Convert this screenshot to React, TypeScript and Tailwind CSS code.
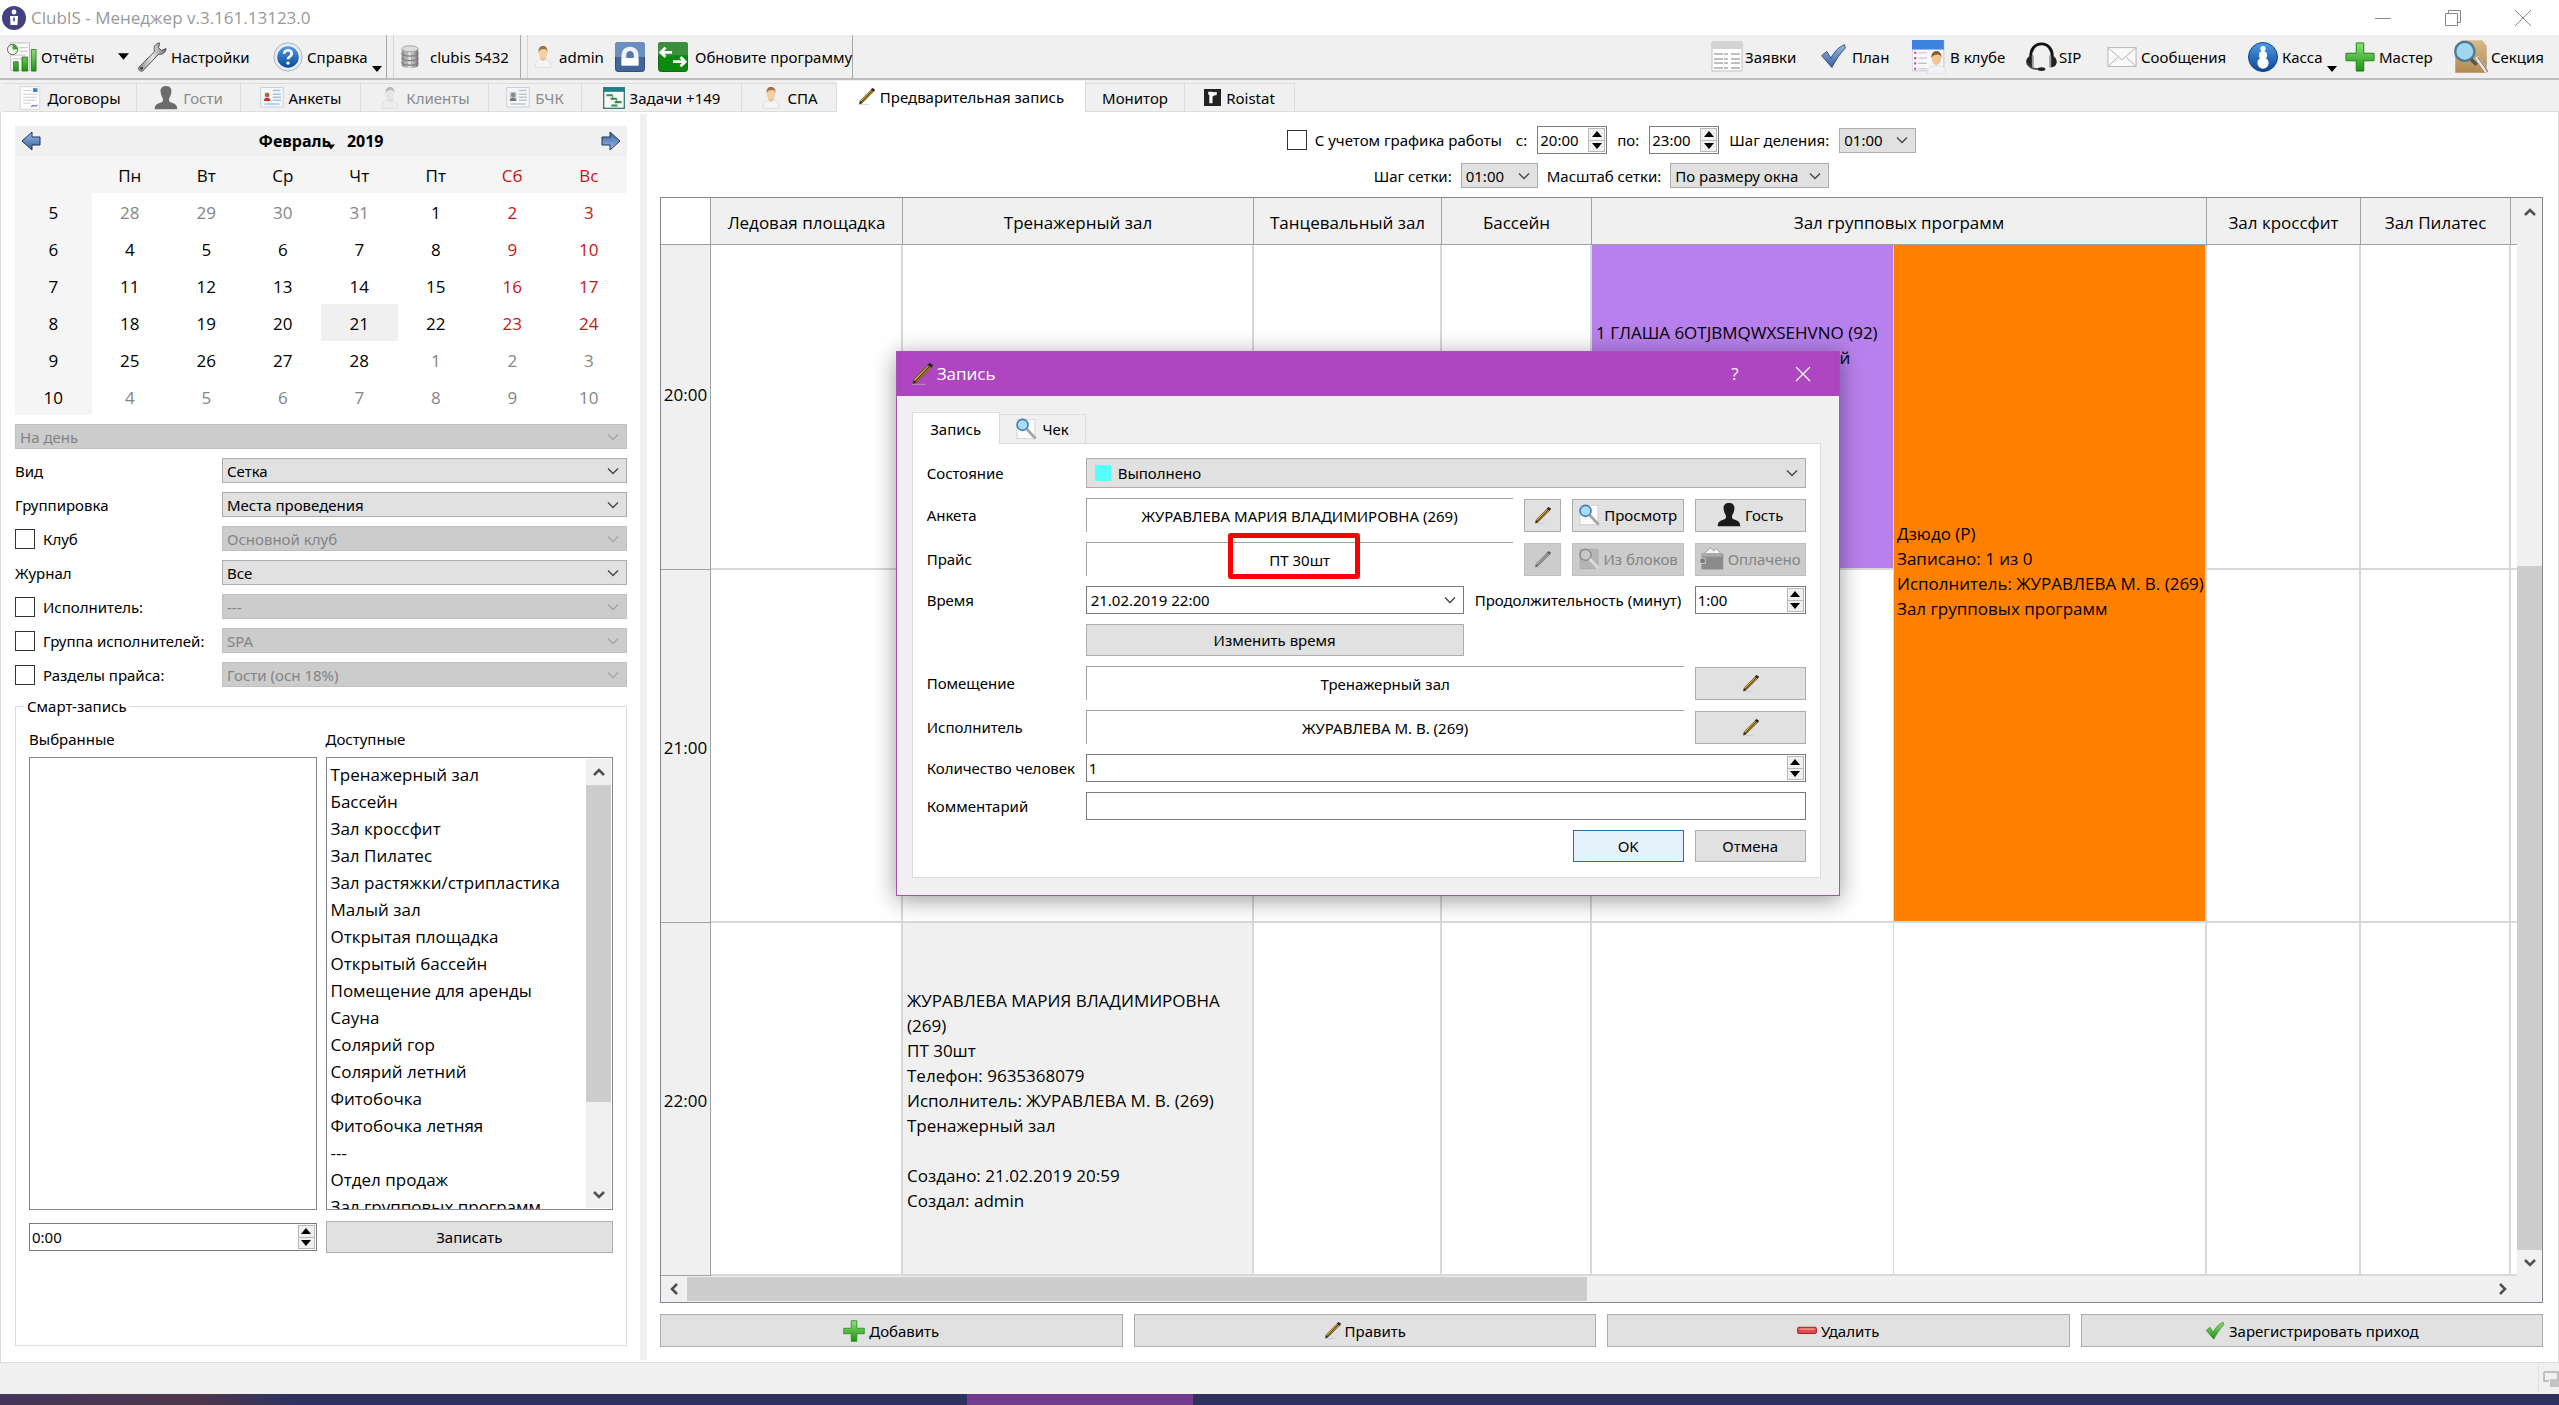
import type { ReactNode } from "react";

const ui = "font-['Noto_Sans',sans-serif] text-[15px] leading-5";
const grid = "font-['Open_Sans',sans-serif] text-[17px] leading-[25px]";

/* ---------- icons ---------- */

type IconProps = { className?: string };

function Svg({ className = "size-[30px]", box = "0 0 32 32", children }: IconProps & { box?: string; children: ReactNode }) {
  return (
    <svg viewBox={box} className={`shrink-0 ${className}`} fill="none" aria-hidden>
      {children}
    </svg>
  );
}

function Gradients() {
  return (
    <svg className="absolute size-0" aria-hidden>
      <defs>
        <linearGradient id="green" x1="0" y1="0" x2="0" y2="1">
          <stop offset="0" stopColor="#8fe07a" />
          <stop offset="1" stopColor="#1c9412" />
        </linearGradient>
        <linearGradient id="blue" x1="0" y1="0" x2="0" y2="1">
          <stop offset="0" stopColor="#4f9be8" />
          <stop offset="1" stopColor="#0b4794" />
        </linearGradient>
        <linearGradient id="steel" x1="0" y1="0" x2="0" y2="1">
          <stop offset="0" stopColor="#9dbce3" />
          <stop offset="1" stopColor="#35619f" />
        </linearGradient>
        <linearGradient id="silver" x1="0" y1="0" x2="1" y2="0">
          <stop offset="0" stopColor="#8a8a8a" />
          <stop offset="0.5" stopColor="#e6e6e6" />
          <stop offset="1" stopColor="#6f6f6f" />
        </linearGradient>
        <linearGradient id="box" x1="0" y1="0" x2="0" y2="1">
          <stop offset="0" stopColor="#d9bb8b" />
          <stop offset="1" stopColor="#b18850" />
        </linearGradient>
      </defs>
    </svg>
  );
}

function AppLogo() {
  return (
    <Svg className="size-6" box="0 0 24 24">
      <circle cx="12" cy="12" r="12" fill="#45417f" />
      <circle cx="12" cy="6" r="2.4" fill="#fff" />
      <path d="M8 10h8l-.6 9H8.6z" fill="#fff" />
      <path d="M12 10l1 4-1 2-1-2z" fill="#45417f" />
    </Svg>
  );
}

function ReportIcon() {
  return (
    <Svg>
      <path d="M4 1h20v29H4z" fill="#fbfbfb" stroke="#bdbdbd" />
      <path d="M13 6h9M13 10h9M6 14h14M6 18h10" stroke="#cfcfcf" strokeWidth="1.4" />
      <circle cx="6" cy="8" r="5.5" fill="#eef6ea" stroke="#5a5a5a" />
      <path d="M6 8V3a5 5 0 015 5z" fill="#37a52a" />
      <path d="M7 21h5v10H7zM16 16h6v15h-6zM26 8h5v23h-5z" fill="url(#green)" stroke="#1d6414" strokeWidth=".8" />
    </Svg>
  );
}

function WrenchIcon() {
  return (
    <Svg>
      <path d="M24 1c-5 1-7 5-5 9L2 27c-1 2 1 5 4 4l17-18c4 1 8-2 8-6l-5 2-3-3z" fill="url(#silver)" stroke="#4a4a4a" />
      <circle cx="5" cy="28" r="1.4" fill="#333" />
    </Svg>
  );
}

function HelpIcon() {
  return (
    <Svg>
      <circle cx="16" cy="16" r="15" fill="#e8eef5" stroke="#9dafc4" />
      <circle cx="16" cy="16" r="11.5" fill="url(#blue)" />
      <path d="M12 12.500c0-5 8-5 8 0 0 3-4 3-4 6" stroke="#fff" strokeWidth="2.800" />
      <circle cx="16" cy="22.500" r="1.800" fill="#fff" />
    </Svg>
  );
}

function DatabaseIcon() {
  return (
    <Svg className="size-[24px]">
      <path d="M5 5v22c0 5 22 5 22 0V5" fill="url(#silver)" />
      <path d="M5 11c0 5 22 5 22 0M5 17c0 5 22 5 22 0M5 23c0 5 22 5 22 0" stroke="#7a7a7a" strokeWidth="1.500" />
      <path d="M12 9v20M18 10v20M23 9v20" stroke="#9b9b9b" />
      <ellipse cx="16" cy="5" rx="11" ry="4" fill="#dcdcdc" stroke="#999" />
    </Svg>
  );
}

function PersonIcon({ className = "size-[22px]", muted = false }: IconProps & { muted?: boolean }) {
  return (
    <Svg className={className}>
      <path d="M5 31c-1-8 3-11 8-12h6c5 1 9 4 8 12z" fill={muted ? "#ededed" : "#f4f4f7"} stroke="#d5d5da" />
      <path d="M12 15h8v4l-4 3-4-3z" fill={muted ? "#ddd" : "#e9c193"} />
      <ellipse cx="16" cy="10" rx="6" ry="8" fill={muted ? "#e6e6e6" : "#f3cfa3"} />
      <path d="M9.500 10C9 2 12 0 16 0s7 2 6.500 10c-1-4-2-5-4-5.500-3 .5-8 0-9 5.500z" fill={muted ? "#b9b9b9" : "#a0703f"} />
    </Svg>
  );
}

function GuestIcon({ className = "size-[24px]", muted = false }: IconProps & { muted?: boolean }) {
  return (
    <Svg className={className}>
      <path d="M16 0c6 0 8 4 7 9-.5 4-2 6-3 8 0 3 0 4 3 5 5 2 8 3 8 9H1c0-6 3-7 8-9 3-1 3-2 3-5-1-2-2.500-4-3-8-1-5 1-9 7-9z" fill={muted ? "#6b6b6b" : "#1b1b1b"} />
    </Svg>
  );
}

function LockIcon() {
  return (
    <Svg>
      <rect x=".5" y=".5" width="31" height="31" rx="3" fill="#41669c" stroke="#26457a" />
      <path d="M0 16h32V3a3 3 0 00-3-3H3a3 3 0 00-3 3z" fill="#6d8fbf" />
      <path d="M7 25V14c0-12 18-12 18 0v11z" fill="#eef2f8" />
      <path d="M12 17v-3c0-6 8-6 8 0v3z" fill="#5478ab" />
      <path d="M7 17h18v8H7z" fill="#fff" />
    </Svg>
  );
}

function UpdateIcon() {
  return (
    <Svg>
      <rect x=".5" y=".5" width="31" height="31" rx="3" fill="#0c8a0c" stroke="#0a5f14" />
      <path d="M0 14h32V3a3 3 0 00-3-3H3a3 3 0 00-3 3z" fill="#3d8f3f" />
      <path d="M8 6l-5 5 5 5M3 11h12M24 16l5 5-5 5M29 21H16" stroke="#fff" strokeWidth="3" />
    </Svg>
  );
}

function RequestsIcon() {
  return (
    <Svg className="size-8">
      <path d="M1 1h30v29H1z" fill="#fff" stroke="#bdbdbd" />
      <path d="M1 1h30v7H1z" fill="#d4d4d4" />
      <path d="M3 13h14M3 18h14M3 22h14M3 27h14M20 13h9M20 18h9M20 22h9M20 27h9" stroke="#a9a9a9" strokeWidth="1.500" strokeDasharray="9 1" />
    </Svg>
  );
}

function TickIcon({ className = "size-[27px]", green = false }: IconProps & { green?: boolean }) {
  return (
    <Svg className={className}>
      <path d="M2 15l6-5 5 8C17 10 22 5 29 2l1 4C24 12 19 20 14 29z" fill={green ? "url(#green)" : "url(#steel)"} stroke={green ? "#2c7a1f" : "#27406a"} />
    </Svg>
  );
}

function InClubIcon() {
  return (
    <Svg className="size-[34px]">
      <path d="M0 1h30v28H0z" fill="#f8f8fb" stroke="#c4c8d4" />
      <path d="M0 0h30v9H0z" fill="#3c83e0" />
      <path d="M2 12h2M2 17h2M2 22h2M2 27h2" stroke="#d0489a" strokeWidth="2" />
      <path d="M6 12h8M6 17h8M6 22h8M6 27h8" stroke="#b8c0d0" />
      <path d="M14 32c0-6 3-8 9-8s9 2 9 8z" fill="#f2f2f6" stroke="#cfcfd6" strokeWidth=".6" />
      <ellipse cx="23" cy="17" rx="4.500" ry="6.500" fill="#f0c795" />
      <path d="M18 17c0-9 10-9 10 0-1-5-8-4-10 0z" fill="#8a5a2c" />
    </Svg>
  );
}

function HeadsetIcon() {
  return (
    <Svg className="size-[31px]">
      <path d="M5 18C3-2 29-2 27 18" stroke="#111" strokeWidth="3" />
      <path d="M7 15c-9 0-9 13 0 12zM25 15c9 0 9 13 0 12z" fill="#222" />
      <path d="M7 15v12M25 15v12" stroke="#999" strokeWidth="2" />
      <path d="M2 22c1 7 7 7 12 7" stroke="#444" strokeWidth="1.500" />
      <ellipse cx="16" cy="29" rx="4" ry="2" fill="#222" />
    </Svg>
  );
}

function MailIcon() {
  return (
    <Svg>
      <rect x="1" y="6" width="30" height="20" fill="#fafafa" stroke="#b3b3b3" />
      <path d="M1 6l15 13L31 6M1 26l11-10M31 26L20 16" stroke="#b0b0b0" />
    </Svg>
  );
}

function CashIcon() {
  return (
    <Svg>
      <circle cx="16" cy="16" r="15.500" fill="url(#blue)" stroke="#0b4080" />
      <circle cx="16" cy="7" r="2.800" fill="#fff" />
      <circle cx="16" cy="14" r="4.300" fill="#fff" />
      <circle cx="16" cy="22.500" r="6" fill="#fff" />
    </Svg>
  );
}

function PlusIcon({ className = "size-[30px]" }: IconProps) {
  return (
    <Svg className={className}>
      <path d="M12 1h8v11h11v8H20v11h-8V20H1v-8h11z" fill="url(#green)" stroke="#17800f" />
    </Svg>
  );
}

function MinusIcon() {
  return (
    <Svg className="size-[20px]">
      <rect x="1" y="10" width="30" height="10" rx="2" fill="#e14b4f" stroke="#9c1d22" strokeWidth="1.500" />
      <path d="M4 13h24" stroke="#f5a0a0" strokeWidth="2" />
    </Svg>
  );
}

function SectionIcon() {
  return (
    <Svg className="size-[36px]">
      <path d="M2 6l6-5h18l4 5v24H2z" fill="url(#box)" />
      <path d="M21 16l9 13" stroke="#e8e8e8" strokeWidth="3.500" />
      <path d="M22 16l9 13" stroke="#777" />
      <circle cx="10.500" cy="11" r="8.500" fill="#9fd8ee" stroke="#4e7896" strokeWidth="2" />
      <path d="M16 18l5 5" stroke="#555" strokeWidth="3" />
    </Svg>
  );
}

function SearchIcon({ className = "size-[22px]", muted = false }: IconProps & { muted?: boolean }) {
  return (
    <Svg className={className}>
      <path d="M3 2h26v28H3z" fill={muted ? "#b5b5b5" : "#fbfbfb"} stroke={muted ? "#a5a5a5" : "#c8c8c8"} />
      <circle cx="11" cy="10" r="8" fill={muted ? "#c9c9c9" : "#a6def7"} stroke={muted ? "#8d8d8d" : "#3f76ac"} strokeWidth="2.200" />
      <path d="M17 16l13 14" stroke={muted ? "#dcdcdc" : "#a4a4a4"} strokeWidth="4" />
    </Svg>
  );
}

function WalletIcon() {
  return (
    <Svg className="size-[24px]">
      <path d="M5 9l9-8 4 4 4-3 6 7" fill="#f2f2f2" stroke="#8a8a8a" />
      <path d="M2 8h27l2 3v19H2z" fill="#8b8b8b" />
      <path d="M2 8h27v5H2z" fill="#a9a9a9" />
      <path d="M0 15h7v7H0z" fill="#7a7a7a" stroke="#ddd" />
    </Svg>
  );
}

function PencilIcon({ className = "size-[17px]", muted = false }: IconProps & { muted?: boolean }) {
  return (
    <Svg className={className}>
      <path d="M1 31h20" stroke="#bbb" />
      <path d="M25 3l5 3L9 27l-6 3 1-6z" fill={muted ? "#b5b5b5" : "#e3bf4c"} stroke={muted ? "#777" : "#6d531a"} strokeWidth="1.500" />
      <path d="M27 5L6 27" stroke={muted ? "#777" : "#4b3a16"} strokeWidth="2" />
      <path d="M24 3l3-3 5 3-2 4zM3 30l1-5 4 3z" fill={muted ? "#666" : "#222"} />
    </Svg>
  );
}

function DocIcon() {
  return (
    <Svg className="size-[24px]">
      <path d="M3 1h26v30H3z" fill="#fff" stroke="#ccc" />
      <path d="M7 6h10M7 11h18M7 15h18M7 19h18M7 23h10" stroke="#c9d0dc" strokeWidth="1.500" />
      <path d="M20 3h6v5h-6z" fill="#3c7fd0" />
      <path d="M18 28c2-5 4 2 8-3" stroke="#6a5fc0" strokeWidth="1.500" />
    </Svg>
  );
}

function CardIcon({ muted = false }: { muted?: boolean }) {
  return (
    <Svg className="size-[24px]">
      <path d="M1 2h30v26H1z" fill="#f5f8fb" stroke="#b9c4cf" />
      <path d="M5 8h9v12H5z" fill={muted ? "#c7c7c7" : "#dfe7f0"} />
      <circle cx="9.500" cy="12" r="3" fill={muted ? "#888" : "#b5622e"} />
      <path d="M5 20c0-6 9-6 9 0z" fill={muted ? "#777" : "#c9302c"} />
      <path d="M17 6h10M17 11h11M17 15h11M17 19h11M6 24h20" stroke={muted ? "#c3c3c3" : "#9fc3de"} strokeWidth="1.800" />
    </Svg>
  );
}

function TasksIcon() {
  return (
    <Svg className="size-[22px]">
      <rect x="1" y="1" width="30" height="30" fill="#f7fbfa" stroke="#3f7d7c" strokeWidth="2" />
      <path d="M1 1h30v6H1z" fill="#1d7f88" />
      <path d="M5 12h9M11 17h9M17 22h10M12 27h9" stroke="#2f8f4d" strokeWidth="3" />
      <path d="M14 12v5M20 17v5" stroke="#555" />
    </Svg>
  );
}

function RoistatIcon() {
  return (
    <Svg className="size-[17px]">
      <rect width="32" height="32" fill="#222" />
      <path d="M8 8h5v19M13 15c1-5 4-7 11-6" stroke="#fff" strokeWidth="6" />
    </Svg>
  );
}

function ArrowIcon({ flip = false }: { flip?: boolean }) {
  return (
    <Svg className={flip ? "size-5 rotate-180" : "size-5"} box="0 0 20 20">
      <path d="M1 10l10-9v5h8v8h-8v5z" fill="url(#steel)" stroke="#1f3560" />
    </Svg>
  );
}

function Caret({ className = "size-[10px]" }: IconProps) {
  return (
    <Svg className={className} box="0 0 10 10">
      <path d="M0 2h10L5 8z" fill="#000" />
    </Svg>
  );
}

function Chevron({ className, stroke = "#444" }: IconProps & { stroke?: string }) {
  return (
    <Svg className={className} box="0 0 12 12">
      <path d="M1 3.500l5 5 5-5" stroke={stroke} strokeWidth="1.300" />
    </Svg>
  );
}

function ScrollArrow({ className = "" }: IconProps) {
  return (
    <Svg className={`size-3 ${className}`} box="0 0 12 12">
      <path d="M1 9l5-5 5 5" stroke="#505050" strokeWidth="2.500" />
    </Svg>
  );
}

/* ---------- controls ---------- */

type SelectProps = {
  id?: string;
  label?: string;
  value: string;
  disabled?: boolean;
  className?: string;
  look?: string;
};

function Select({ id, label, value, disabled = false, className = "flex-1", look = "h-[25px] pl-1" }: SelectProps) {
  return (
    <div className={`relative ${className}`}>
      <select
        id={id}
        aria-label={label}
        disabled={disabled}
        className={`block w-full appearance-none border pr-6 opacity-100 ${look} ${
          disabled ? "border-[#bfbfbf] bg-[#cccccc] text-[#838383]" : "border-[#adadad] bg-[#e1e1e1] text-black"
        }`}
      >
        <option>{value}</option>
      </select>
      <Chevron className="pointer-events-none absolute top-1/2 right-2 size-3 -translate-y-1/2" stroke={disabled ? "#a3a3a3" : "#444"} />
    </div>
  );
}

function Spin({ id, label, value, className }: { id?: string; label?: string; value: string; className: string }) {
  return (
    <div className={`flex border border-[#7a7a7a] bg-white ${className}`}>
      <input id={id} aria-label={label} defaultValue={value} className="w-0 min-w-0 flex-1 px-[2px] outline-none" />
      <div className="flex w-[19px] flex-col p-px">
        <button aria-label="Больше" className="flex flex-1 items-center justify-center border border-[#b8b8b8] bg-[#f0f0f0]">
          <Caret className="size-[10px] rotate-180" />
        </button>
        <button aria-label="Меньше" className="flex flex-1 items-center justify-center border border-t-0 border-[#b8b8b8] bg-[#f0f0f0]">
          <Caret className="size-[10px]" />
        </button>
      </div>
    </div>
  );
}

function Button({ children, className = "", disabled = false, label }: { children: ReactNode; className?: string; disabled?: boolean; label?: string }) {
  return (
    <button
      aria-label={label}
      disabled={disabled}
      className={`flex items-center justify-center gap-1 border ${
        disabled ? "border-[#bfbfbf] bg-[#cccccc] text-[#838383]" : "border-[#adadad] bg-[#e1e1e1]"
      } ${className}`}
    >
      {children}
    </button>
  );
}

function Check({ id }: { id: string }) {
  return <input id={id} type="checkbox" className="size-5 shrink-0 appearance-none border border-[#333] bg-white" />;
}

/* ---------- top bars ---------- */

function TitleBar() {
  return (
    <header className="flex h-[35px] items-center justify-between bg-white pr-7 pl-[2px]">
      <div className="flex items-center gap-[5px]">
        <AppLogo />
        <h1 className="font-['Open_Sans',sans-serif] text-[17px] text-[#999]">ClubIS - Менеджер v.3.161.13123.0</h1>
      </div>
      <div className="flex gap-[54px]">
        <button aria-label="Свернуть">
          <Svg className="size-4" box="0 0 16 16"><path d="M0 8.500h16" stroke="#888" /></Svg>
        </button>
        <button aria-label="Восстановить">
          <Svg className="size-4" box="0 0 16 16"><path d="M.5 3.500h12v12H.5zM3.500 3V.5h12v12H13" stroke="#888" /></Svg>
        </button>
        <button aria-label="Закрыть">
          <Svg className="size-4" box="0 0 16 16"><path d="M0 0l16 16M16 0L0 16" stroke="#888" /></Svg>
        </button>
      </div>
    </header>
  );
}

const rightTools = [
  { name: "Заявки", icon: <RequestsIcon />, width: "w-[109px] gap-[2px]" },
  { name: "План", icon: <TickIcon />, width: "w-[92px] gap-[5px]" },
  { name: "В клубе", icon: <InClubIcon />, width: "w-[114px] gap-1" },
  { name: "SIP", icon: <HeadsetIcon />, width: "w-[81px] gap-[2px]" },
  { name: "Сообщения", icon: <MailIcon />, width: "w-[141px] gap-1" },
  { name: "Касса", icon: <CashIcon />, width: "w-[97px] gap-1", menu: true },
  { name: "Мастер", icon: <PlusIcon />, width: "w-[108px] gap-1" },
  { name: "Секция", icon: <SectionIcon />, width: "w-[106px] gap-[2px]" },
];

function ToolBar() {
  return (
    <nav aria-label="Панель инструментов" className="flex h-[45px] border-b-2 border-[#bdbdbd] whitespace-nowrap">
      <div className="flex border-r border-[#a9a9a9] pl-[7px]">
        <button className="flex w-[111px] items-center gap-1"><ReportIcon />Отчёты</button>
        <button aria-label="Выбрать отчёт" className="w-[19px]"><Caret className="size-[11px]" /></button>
        <button className="flex w-[136px] items-center gap-1"><WrenchIcon />Настройки</button>
        <button className="flex w-[113px] items-center gap-1">
          <HelpIcon />Справка<Caret className="mt-6 size-[10px]" />
        </button>
      </div>
      <div className="ml-[6px] flex w-[128px] items-center gap-2 border-x border-r-[#a9a9a9] border-l-[#d4d4d4] pl-1">
        <DatabaseIcon />clubis 5432
      </div>
      <div className="ml-[6px] flex border-x border-r-[#a9a9a9] border-l-[#d4d4d4] pl-1">
        <button className="flex w-[83px] items-center gap-[5px]"><PersonIcon />admin</button>
        <button aria-label="Заблокировать" className="flex w-[43px] items-center"><LockIcon /></button>
        <button className="flex w-[194px] items-center gap-[7px]"><UpdateIcon />Обновите программу</button>
      </div>
      <div className="ml-auto flex">
        {rightTools.map((tool) => (
          <button key={tool.name} className={`flex items-center ${tool.width}`}>
            {tool.icon}
            {tool.name}
            {tool.menu && <Caret className="mt-6 size-[10px]" />}
          </button>
        ))}
      </div>
    </nav>
  );
}

const tabs = [
  { name: "Договоры", icon: <DocIcon />, width: "w-[134px]" },
  { name: "Гости", icon: <GuestIcon muted />, width: "w-[104px]", muted: true },
  { name: "Анкеты", icon: <CardIcon />, width: "w-[120px]" },
  { name: "Клиенты", icon: <PersonIcon muted />, width: "w-[128px]", muted: true },
  { name: "БЧК", icon: <CardIcon muted />, width: "w-[93px]", muted: true },
  { name: "Задачи +149", icon: <TasksIcon />, width: "w-[160px]" },
  { name: "СПА", icon: <PersonIcon />, width: "w-[95px]" },
  { name: "Предварительная запись", icon: <PencilIcon />, width: "w-[249px]", active: true },
  { name: "Монитор", icon: null, width: "w-[99px]" },
  { name: "Roistat", icon: <RoistatIcon />, width: "w-[110px]" },
];

function MainTabs() {
  return (
    <div role="tablist" className="flex h-[32px] items-end pt-px pl-[3px] whitespace-nowrap">
      {tabs.map((tab) => (
        <button
          key={tab.name}
          role="tab"
          aria-selected={!!tab.active}
          className={`flex items-center justify-center gap-[5px] border-r ${tab.width} ${
            tab.active ? "h-full border-r-[#dcdcdc] bg-white" : "h-[29px] border-y border-[#dcdcdc]"
          } ${tab.muted ? "text-[#8a8a8a]" : ""}`}
        >
          {tab.icon}
          {tab.name}
        </button>
      ))}
      <div className="h-px flex-1 bg-[#dcdcdc]" />
    </div>
  );
}

/* ---------- left side ---------- */

const days = ["Пн", "Вт", "Ср", "Чт", "Пт", "Сб", "Вс"];
const weeks = [
  { week: 5, dates: [28, 29, 30, 31, 1, 2, 3] },
  { week: 6, dates: [4, 5, 6, 7, 8, 9, 10] },
  { week: 7, dates: [11, 12, 13, 14, 15, 16, 17] },
  { week: 8, dates: [18, 19, 20, 21, 22, 23, 24] },
  { week: 9, dates: [25, 26, 27, 28, 1, 2, 3] },
  { week: 10, dates: [4, 5, 6, 7, 8, 9, 10] },
];

function dayColor(week: number, date: number, col: number) {
  const outside = (week === 5 && date > 20) || (week >= 9 && date < 20);
  if (outside) return "text-[#858585]";
  return col > 4 ? "text-[#cc1414]" : "text-black";
}

function Calendar() {
  return (
    <section aria-label="Календарь" className="font-['Open_Sans',sans-serif] text-[17px]">
      <div className="flex h-[30px] items-center justify-between bg-[#f0f0f0] px-[6px]">
        <button aria-label="Предыдущий месяц"><ArrowIcon /></button>
        <div className="flex items-center font-['Noto_Sans',sans-serif] text-[16px] font-bold">
          <button className="flex items-center">Февраль<Caret className="mt-3 -ml-1 size-2" /></button>
          <button className="ml-3">2019</button>
        </div>
        <button aria-label="Следующий месяц"><ArrowIcon flip /></button>
      </div>
      <table className="w-full table-fixed text-center">
        <thead>
          <tr className="h-[37px] bg-[#f5f5f5]">
            <td />
            {days.map((day, i) => (
              <th key={day} className={`pt-[2px] font-normal ${i > 4 ? "text-[#cc1414]" : ""}`}>{day}</th>
            ))}
          </tr>
        </thead>
        <tbody>
          {weeks.map(({ week, dates }) => (
            <tr key={week} className="h-[37px]">
              <th className="bg-[#f5f5f5] pt-[2px] font-normal">{week}</th>
              {dates.map((date, i) => (
                <td key={i} className={`pt-[2px] ${dayColor(week, date, i)} ${week === 8 && date === 21 ? "bg-[#f0f0f0]" : ""}`}>
                  {date}
                </td>
              ))}
            </tr>
          ))}
        </tbody>
      </table>
    </section>
  );
}

const filters = [
  { id: "view", name: "Вид", value: "Сетка" },
  { id: "group", name: "Группировка", value: "Места проведения" },
  { id: "club", name: "Клуб", value: "Основной клуб", off: true },
  { id: "journal", name: "Журнал", value: "Все" },
  { id: "executor", name: "Исполнитель:", value: "---", off: true },
  { id: "executors", name: "Группа исполнителей:", value: "SPA", off: true },
  { id: "sections", name: "Разделы прайса:", value: "Гости (осн 18%)", off: true },
];

const available = [
  "Тренажерный зал",
  "Бассейн",
  "Зал кроссфит",
  "Зал Пилатес",
  "Зал растяжки/стрипластика",
  "Малый зал",
  "Открытая площадка",
  "Открытый бассейн",
  "Помещение для аренды",
  "Сауна",
  "Солярий гор",
  "Солярий летний",
  "Фитобочка",
  "Фитобочка летняя",
  "---",
  "Отдел продаж",
  "Зал групповых программ",
];

function SmartBooking() {
  return (
    <fieldset className="flex-1 border border-[#dcdcdc] px-[13px]">
      <legend className="-ml-1 px-[2px]">Смарт-запись</legend>
      <div className="grid grid-cols-2 gap-x-[9px] pt-[13px]">
        <p>Выбранные</p>
        <p>Доступные</p>
        <div className="mt-2 h-[453px] border border-[#828790] bg-white" />
        <div className="mt-2 flex h-[453px] border border-[#828790] bg-white">
          <ul className="flex-1 overflow-hidden pt-[3px] pl-1 font-['Open_Sans',sans-serif] text-[17px] leading-[27px]">
            {available.map((place) => (
              <li key={place}>{place}</li>
            ))}
          </ul>
          <div className="my-px mr-px flex w-[25px] flex-col items-center bg-[#f0f0f0]">
            <div className="flex h-[26px] items-center"><ScrollArrow /></div>
            <div className="h-[317px] w-full bg-[#cdcdcd]" />
            <div className="mt-auto flex h-[26px] items-center"><ScrollArrow className="rotate-180" /></div>
          </div>
        </div>
        <div className="mt-[11px] flex h-[32px] items-center">
          <Spin label="Длительность" value="0:00" className="h-[28px] flex-1" />
        </div>
        <Button className="mt-[11px] h-[32px]">Записать</Button>
      </div>
    </fieldset>
  );
}

function SidePanel() {
  return (
    <aside className="flex w-[640px] shrink-0 flex-col gap-[9px] border-l border-[#dcdcdc] pt-[14px] pr-[13px] pb-4 pl-[14px]">
      <Calendar />
      <Select label="Период" value="На день" disabled className="" />
      {filters.map(({ id, name, value, off }) => (
        <div key={id} className="flex h-[25px] items-center">
          <div className="flex w-[207px] items-center gap-2">
            {off && <Check id={`${id}-on`} />}
            <label htmlFor={off ? `${id}-on` : id}>{name}</label>
          </div>
          <Select id={id} label={name} value={value} disabled={off} />
        </div>
      ))}
      <SmartBooking />
    </aside>
  );
}

/* ---------- schedule ---------- */

function ScheduleOptions() {
  return (
    <div className="flex flex-col gap-[9px] whitespace-nowrap">
      <div className="flex h-[28px] items-center justify-center gap-[10px]">
        <div className="flex items-center gap-2">
          <Check id="by-hours" />
          <label htmlFor="by-hours">С учетом графика работы</label>
        </div>
        <label htmlFor="from" className="ml-1">с:</label>
        <Spin id="from" value="20:00" className="h-[28px] w-[70px]" />
        <label htmlFor="to">по:</label>
        <Spin id="to" value="23:00" className="h-[28px] w-[70px]" />
        <label htmlFor="step">Шаг деления:</label>
        <Select id="step" value="01:00" className="w-[77px]" />
      </div>
      <div className="flex h-[25px] items-center justify-center gap-[9px]">
        <label htmlFor="grid-step">Шаг сетки:</label>
        <Select id="grid-step" value="01:00" className="w-[77px]" />
        <label htmlFor="scale">Масштаб сетки:</label>
        <Select id="scale" value="По размеру окна" className="w-[159px]" />
      </div>
    </div>
  );
}

const cell = "border-r-2 border-b-2 border-[#d8d8d8] pl-1";
const head = "border-r border-b border-[#a0a0a0] bg-[#f0f0f0] pt-[2px] font-normal";

function Schedule() {
  return (
    <div className="border border-[#828790]">
      <div className="flex">
        <table className={`w-full flex-1 table-fixed border-separate border-spacing-0 ${grid}`}>
          <colgroup>
            <col className="w-[50px]" />
            <col className="w-[192px]" />
            <col className="w-[351px]" />
            <col className="w-[188px]" />
            <col className="w-[150px]" />
            <col className="w-[302px]" />
            <col className="w-[313px]" />
            <col className="w-[154px]" />
            <col className="w-[150px]" />
            <col className="w-[6px]" />
          </colgroup>
          <thead>
            <tr className="h-[47px]">
              <td className="border-r border-b border-[#a0a0a0]" />
              <th className={head}>Ледовая площадка</th>
              <th className={head}>Тренажерный зал</th>
              <th className={head}>Танцевальный зал</th>
              <th className={head}>Бассейн</th>
              <th colSpan={2} className={head}>Зал групповых программ</th>
              <th className={head}>Зал кроссфит</th>
              <th className={head}>Зал Пилатес</th>
              <td className="border-b border-[#a0a0a0] bg-[#f0f0f0]" />
            </tr>
          </thead>
          <tbody>
            <tr className="h-[325px]">
              <th className={`${head} pb-[28px]`}>20:00</th>
              <td className={cell} />
              <td className={cell} />
              <td className={cell} />
              <td className={cell} />
              <td className="border-r border-b-2 border-[#d8d8d8] bg-[#b880ec] px-1 pt-[75px] align-top whitespace-nowrap">
                <p>1 ГЛАША 6OTJBMQWXSEHVNO (92)</p>
                <p>Активация занятия ПТ 30 дней</p>
              </td>
              <td rowSpan={2} className="border-r-2 border-b-2 border-[#d8d8d8] bg-[#ff8000] pb-[24px] pl-[3px] whitespace-nowrap">
                <p>Дзюдо (Р)</p>
                <p>Записано: 1 из 0</p>
                <p>Исполнитель: ЖУРАВЛЕВА М. В. (269)</p>
                <p>Зал групповых программ</p>
              </td>
              <td className={cell} />
              <td className={cell} />
              <td className="border-b-2 border-[#d8d8d8]" />
            </tr>
            <tr className="h-[353px]">
              <th className={head}>21:00</th>
              <td className={cell} />
              <td className={cell} />
              <td className={cell} />
              <td className={cell} />
              <td className="border-r border-b-2 border-[#d8d8d8]" />
              <td className={cell} />
              <td className={cell} />
              <td className="border-b-2 border-[#d8d8d8]" />
            </tr>
            <tr className="h-[353px]">
              <th className={head}>22:00</th>
              <td className={cell} />
              <td className={`${cell} bg-[#f0f0f0] pt-1`}>
                <p>ЖУРАВЛЕВА МАРИЯ ВЛАДИМИРОВНА (269)</p>
                <p>ПТ 30шт</p>
                <p>Телефон: 9635368079</p>
                <p>Исполнитель: ЖУРАВЛЕВА М. В. (269)</p>
                <p>Тренажерный зал</p>
                <p className="mt-[25px]">Создано: 21.02.2019 20:59</p>
                <p>Создал: admin</p>
              </td>
              <td className={cell} />
              <td className={cell} />
              <td className="border-r border-b-2 border-[#d8d8d8]" />
              <td className={cell} />
              <td className={cell} />
              <td className={cell} />
              <td className="border-b-2 border-[#d8d8d8]" />
            </tr>
          </tbody>
        </table>
        <div className="flex w-[26px] flex-col items-center bg-[#f0f0f0]">
          <div className="flex h-[28px] items-center"><ScrollArrow /></div>
          <div className="mt-auto h-[684px] w-full bg-[#cdcdcd]" />
          <div className="flex h-[26px] items-center"><ScrollArrow className="rotate-180" /></div>
        </div>
      </div>
      <div className="flex h-[26px] items-center bg-[#f0f0f0] pr-[26px]">
        <div className="flex w-[26px] justify-center"><ScrollArrow className="-rotate-90" /></div>
        <div className="h-[24px] w-[48.5%] bg-[#cdcdcd]" />
        <div className="ml-auto flex w-[26px] justify-center"><ScrollArrow className="rotate-90" /></div>
      </div>
    </div>
  );
}

/* ---------- booking dialog ---------- */

function Row({ name, htmlFor, children, className = "h-[34px]" }: { name?: string; htmlFor?: string; children: ReactNode; className?: string }) {
  return (
    <div className={`flex items-center gap-[11px] ${className}`}>
      <label htmlFor={htmlFor} className="w-[148px] shrink-0 whitespace-nowrap">{name}</label>
      {children}
    </div>
  );
}

function Sunken({ id, value }: { id: string; value: string }) {
  return (
    <input
      id={id}
      readOnly
      defaultValue={value}
      className="h-[34px] min-w-0 flex-1 border-t border-l border-[#a0a0a0] bg-white text-center outline-none"
    />
  );
}

function BookingDialog() {
  return (
    <div
      role="dialog"
      aria-labelledby="dialog-title"
      className="absolute top-[351px] left-[35%] w-[944px] border border-[#a94fb8] bg-[#f0f0f0] shadow-[0_4px_22px_rgba(0,0,0,0.4)]"
    >
      <div className="flex h-[44px] items-center bg-[#ae46c1] pl-[14px] text-white">
        <PencilIcon className="size-[22px]" />
        <h2 id="dialog-title" className="ml-1 font-['Open_Sans',sans-serif] text-[17px]">Запись</h2>
        <button aria-label="Справка" className="ml-auto font-['Open_Sans',sans-serif] text-[17px]">?</button>
        <button aria-label="Закрыть" className="mr-7 ml-[56px]">
          <Svg className="size-4" box="0 0 16 16"><path d="M1 1l14 14M15 1L1 15" stroke="#fff" strokeWidth="1.200" /></Svg>
        </button>
      </div>
      <div className="pt-4 pr-[18px] pb-[17px] pl-[15px]">
        <div role="tablist" className="flex items-end">
          <button role="tab" aria-selected className="relative -mb-px h-[32px] w-[88px] border border-b-0 border-[#dcdcdc] bg-white">Запись</button>
          <button role="tab" aria-selected={false} className="flex h-[29px] w-[86px] items-center justify-center gap-[5px] border border-b-0 border-l-0 border-[#dcdcdc]">
            <SearchIcon />Чек
          </button>
        </div>
        <div className="flex flex-col gap-[10px] border border-[#dcdcdc] bg-white px-[14px] pt-[14px] pb-[15px]">
          <Row name="Состояние" htmlFor="state" className="h-[30px]">
            <div className="relative flex-1">
              <Select id="state" value="Выполнено" className="" look="h-[30px] pl-[31px]" />
              <span className="pointer-events-none absolute top-[7px] left-[9px] size-4 bg-[#55ffff]" />
            </div>
          </Row>
          <Row name="Анкета" htmlFor="client">
            <Sunken id="client" value="ЖУРАВЛЕВА МАРИЯ ВЛАДИМИРОВНА (269)" />
            <Button label="Выбрать анкету" className="h-[33px] w-[37px]"><PencilIcon /></Button>
            <Button className="h-[33px] w-[112px]"><SearchIcon />Просмотр</Button>
            <Button className="h-[33px] w-[111px]"><GuestIcon />Гость</Button>
          </Row>
          <Row name="Прайс" htmlFor="price">
            <div className="relative flex flex-1">
              <Sunken id="price" value="ПТ 30шт" />
              <span className="pointer-events-none absolute -top-[9px] left-1/3 h-[46px] w-[132px] rounded-[3px] border-[5px] border-[#fb0000]" />
            </div>
            <Button label="Выбрать прайс" disabled className="h-[33px] w-[37px]"><PencilIcon muted /></Button>
            <Button disabled className="h-[33px] w-[112px]"><SearchIcon muted />Из блоков</Button>
            <Button disabled className="h-[33px] w-[111px]"><WalletIcon />Оплачено</Button>
          </Row>
          <Row name="Время" htmlFor="time" className="h-[28px]">
            <div className="relative flex-1">
              <input id="time" defaultValue="21.02.2019 22:00" className="block h-[28px] w-full border border-[#7a7a7a] bg-white px-1 outline-none" />
              <Chevron className="pointer-events-none absolute top-[8px] right-2 size-3" />
            </div>
            <div className="flex w-[331px] items-center justify-between">
              <label htmlFor="duration" className="whitespace-nowrap">Продолжительность (минут)</label>
              <Spin id="duration" value="1:00" className="h-[28px] w-[111px]" />
            </div>
          </Row>
          <Row className="h-[32px]">
            <Button className="mr-[342px] h-[32px] flex-1">Изменить время</Button>
          </Row>
          <Row name="Помещение" htmlFor="room">
            <Sunken id="room" value="Тренажерный зал" />
            <Button label="Выбрать помещение" className="h-[33px] w-[111px]"><PencilIcon /></Button>
          </Row>
          <Row name="Исполнитель" htmlFor="trainer">
            <Sunken id="trainer" value="ЖУРАВЛЕВА М. В. (269)" />
            <Button label="Выбрать исполнителя" className="h-[33px] w-[111px]"><PencilIcon /></Button>
          </Row>
          <Row name="Количество человек" htmlFor="people" className="h-[28px]">
            <Spin id="people" value="1" className="h-[28px] flex-1" />
          </Row>
          <Row name="Комментарий" htmlFor="comment" className="h-[28px]">
            <input id="comment" className="h-[28px] flex-1 border border-[#7a7a7a] bg-white px-1 outline-none" />
          </Row>
          <div className="flex justify-end gap-[11px]">
            <button className="h-[32px] w-[111px] border border-[#2a6ea8] bg-[#e5f1fb]">OK</button>
            <Button className="h-[32px] w-[111px]">Отмена</Button>
          </div>
        </div>
      </div>
    </div>
  );
}

/* ---------- page ---------- */

export default function App() {
  return (
    <div className={`relative flex min-h-screen flex-col bg-[#f0f0f0] text-black ${ui}`}>
      <Gradients />
      <TitleBar />
      <ToolBar />
      <MainTabs />
      <main className="flex flex-1 border-r border-b border-[#dcdcdc] bg-white">
        <SidePanel />
        <div className="my-[2px] w-[7px] shrink-0 bg-[#f0f0f0]" />
        <div className="flex min-w-0 flex-1 flex-col pt-[14px] pr-[15px] pl-[13px]">
          <ScheduleOptions />
          <div className="mt-[9px]"><Schedule /></div>
          <div className="mt-[11px] grid grid-cols-4 gap-[11px] pb-[15px]">
            <Button className="h-[33px]"><PlusIcon className="size-[22px]" />Добавить</Button>
            <Button className="h-[33px]"><PencilIcon />Править</Button>
            <Button className="h-[33px]"><MinusIcon />Удалить</Button>
            <Button className="h-[33px]"><TickIcon green className="size-[20px]" />Зарегистрировать приход</Button>
          </div>
        </div>
      </main>
      <footer>
        <div className="flex h-[31px] items-center justify-end">
          <div className="flex h-[26px] w-[21px] items-center border-l border-[#dcdcdc] pl-1">
            <Svg className="size-4" box="0 0 16 16">
              <path d="M1 1h14v9H9M1 1v9h5" stroke="#b0b0b0" strokeWidth="1.500" />
              <path d="M7 8h9v8H7z" fill="#c4c4c4" />
            </Svg>
          </div>
        </div>
        <div className="flex h-[11px] bg-[#2f325f]">
          <div className="w-[37.8%] bg-linear-to-r from-[#43365a] via-[#4d364a] via-20% to-[#2f325f] to-30%" />
          <div className="w-[226px] bg-[#713c8e]" />
        </div>
      </footer>
      <BookingDialog />
    </div>
  );
}
